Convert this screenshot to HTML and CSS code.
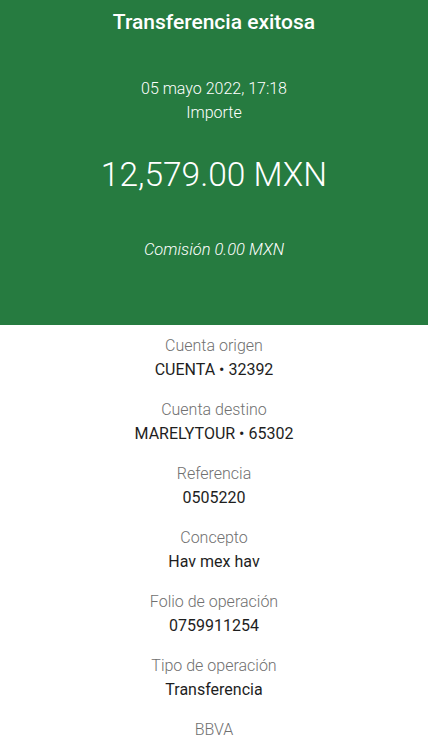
FILE: index.html
```html
<!DOCTYPE html>
<html lang="es">
<head>
<meta charset="utf-8">
<link rel="stylesheet" href="styles.css">
</head>
<body>
<header class="hero">
  <h1 class="title">Transferencia exitosa</h1>
  <div class="date">05 mayo 2022, 17:18</div>
  <div class="label-light">Importe</div>
  <div class="amount">12,579.00 MXN</div>
  <div class="fee">Comisión 0.00 MXN</div>
</header>
<main class="details">
  <div class="item"><div class="lbl">Cuenta origen</div><div class="val">CUENTA • 32392</div></div>
  <div class="item"><div class="lbl">Cuenta destino</div><div class="val">MARELYTOUR • 65302</div></div>
  <div class="item"><div class="lbl">Referencia</div><div class="val">0505220</div></div>
  <div class="item"><div class="lbl">Concepto</div><div class="val">Hav mex hav</div></div>
  <div class="item"><div class="lbl">Folio de operación</div><div class="val">0759911254</div></div>
  <div class="item"><div class="lbl">Tipo de operación</div><div class="val">Transferencia</div></div>
  <div class="item"><div class="lbl">BBVA</div></div>
</main>
</body>
</html>
```
FILE: styles.css
```css
html, body { margin: 0; padding: 0; }
body {
  font-family: Roboto, "Liberation Sans", sans-serif;
  background: #fff;
  width: 428px;
  height: 749px;
  overflow: hidden;
}
.hero {
  background: #267b40;
  color: #fff;
  height: 325px;
  text-align: center;
  display: flex;
  flex-direction: column;
  align-items: center;
}
.title {
  margin: 9px 0 0;
  font-size: 21px;
  font-weight: 500;
  line-height: 26px;
}
.date {
  margin-top: 42px;
  font-size: 16px;
  font-weight: 300;
  line-height: 24px;
}
.label-light {
  font-size: 16px;
  font-weight: 300;
  line-height: 24px;
}
.amount {
  margin-top: 30px;
  font-size: 33.5px;
  font-weight: 300;
  line-height: 40px;
}
.fee {
  margin-top: 43px;
  font-size: 16.5px;
  font-weight: 300;
  font-style: italic;
  line-height: 24px;
}
.details {
  display: flex;
  flex-direction: column;
  align-items: center;
  gap: 16px;
  padding-top: 9px;
  text-align: center;
}
.item { display: flex; flex-direction: column; align-items: center; }
.lbl {
  font-size: 16px;
  font-weight: 300;
  color: #707070;
  line-height: 24px;
}
.val {
  font-size: 16px;
  font-weight: 400;
  color: #1e1e1e;
  line-height: 24px;
}
```
